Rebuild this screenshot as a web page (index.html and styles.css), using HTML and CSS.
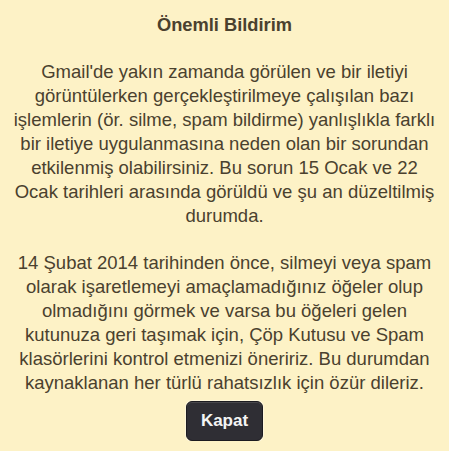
FILE: index.html
```html
<!DOCTYPE html>
<html lang="tr">
<head>
    <meta charset="UTF-8">
    <title>Önemli Bildirim</title>
    <link rel="stylesheet" href="styles.css">
</head>
<body>
    <div class="notice">
        <h1 class="notice-title">Önemli Bildirim</h1>
        <p class="notice-text">Gmail'de yakın zamanda görülen ve bir iletiyi<br>
            görüntülerken gerçekleştirilmeye çalışılan bazı<br>
            işlemlerin (ör. silme, spam bildirme) yanlışlıkla farklı<br>
            bir iletiye uygulanmasına neden olan bir sorundan<br>
            etkilenmiş olabilirsiniz. Bu sorun 15 Ocak ve 22<br>
            Ocak tarihleri arasında görüldü ve şu an düzeltilmiş<br>
            durumda.</p>
        <p class="notice-text">14 Şubat 2014 tarihinden önce, silmeyi veya spam<br>
            olarak işaretlemeyi amaçlamadığınız öğeler olup<br>
            olmadığını görmek ve varsa bu öğeleri gelen<br>
            kutunuza geri taşımak için, Çöp Kutusu ve Spam<br>
            klasörlerini kontrol etmenizi öneririz. Bu durumdan<br>
            kaynaklanan her türlü rahatsızlık için özür dileriz.</p>
        <button class="close-button" type="button">Kapat</button>
    </div>
</body>
</html>
```

FILE: styles.css
```css
body {
    margin: 0;
    background-color: #fdf2c6;
    color: #4a412e;
    font-family: "Liberation Sans", Arial, sans-serif;
}
.notice {
    display: flex;
    flex-direction: column;
    align-items: center;
    padding: 14px 8px 0;
    text-align: center;
}
.notice-title {
    margin: 0 0 24px;
    font-size: 18.3px;
    line-height: 22px;
    font-weight: bold;
}
.notice-text {
    margin: 0;
    font-size: 18.5px;
    line-height: 24px;
    white-space: nowrap;
}
.notice-text + .notice-text {
    margin-top: 23px;
}
.close-button {
    width: 77px;
    height: 40px;
    margin-top: 6px;
    background-color: #2f2e34;
    color: #f4f4f4;
    border: 1px solid #1c1b20;
    border-radius: 6px;
    font-family: "Liberation Sans", Arial, sans-serif;
    font-size: 17px;
    font-weight: bold;
    box-shadow: inset 0 1px 0 rgba(255, 255, 255, 0.12), 0 0 0 1px rgba(255, 255, 255, 0.35);
}
```
